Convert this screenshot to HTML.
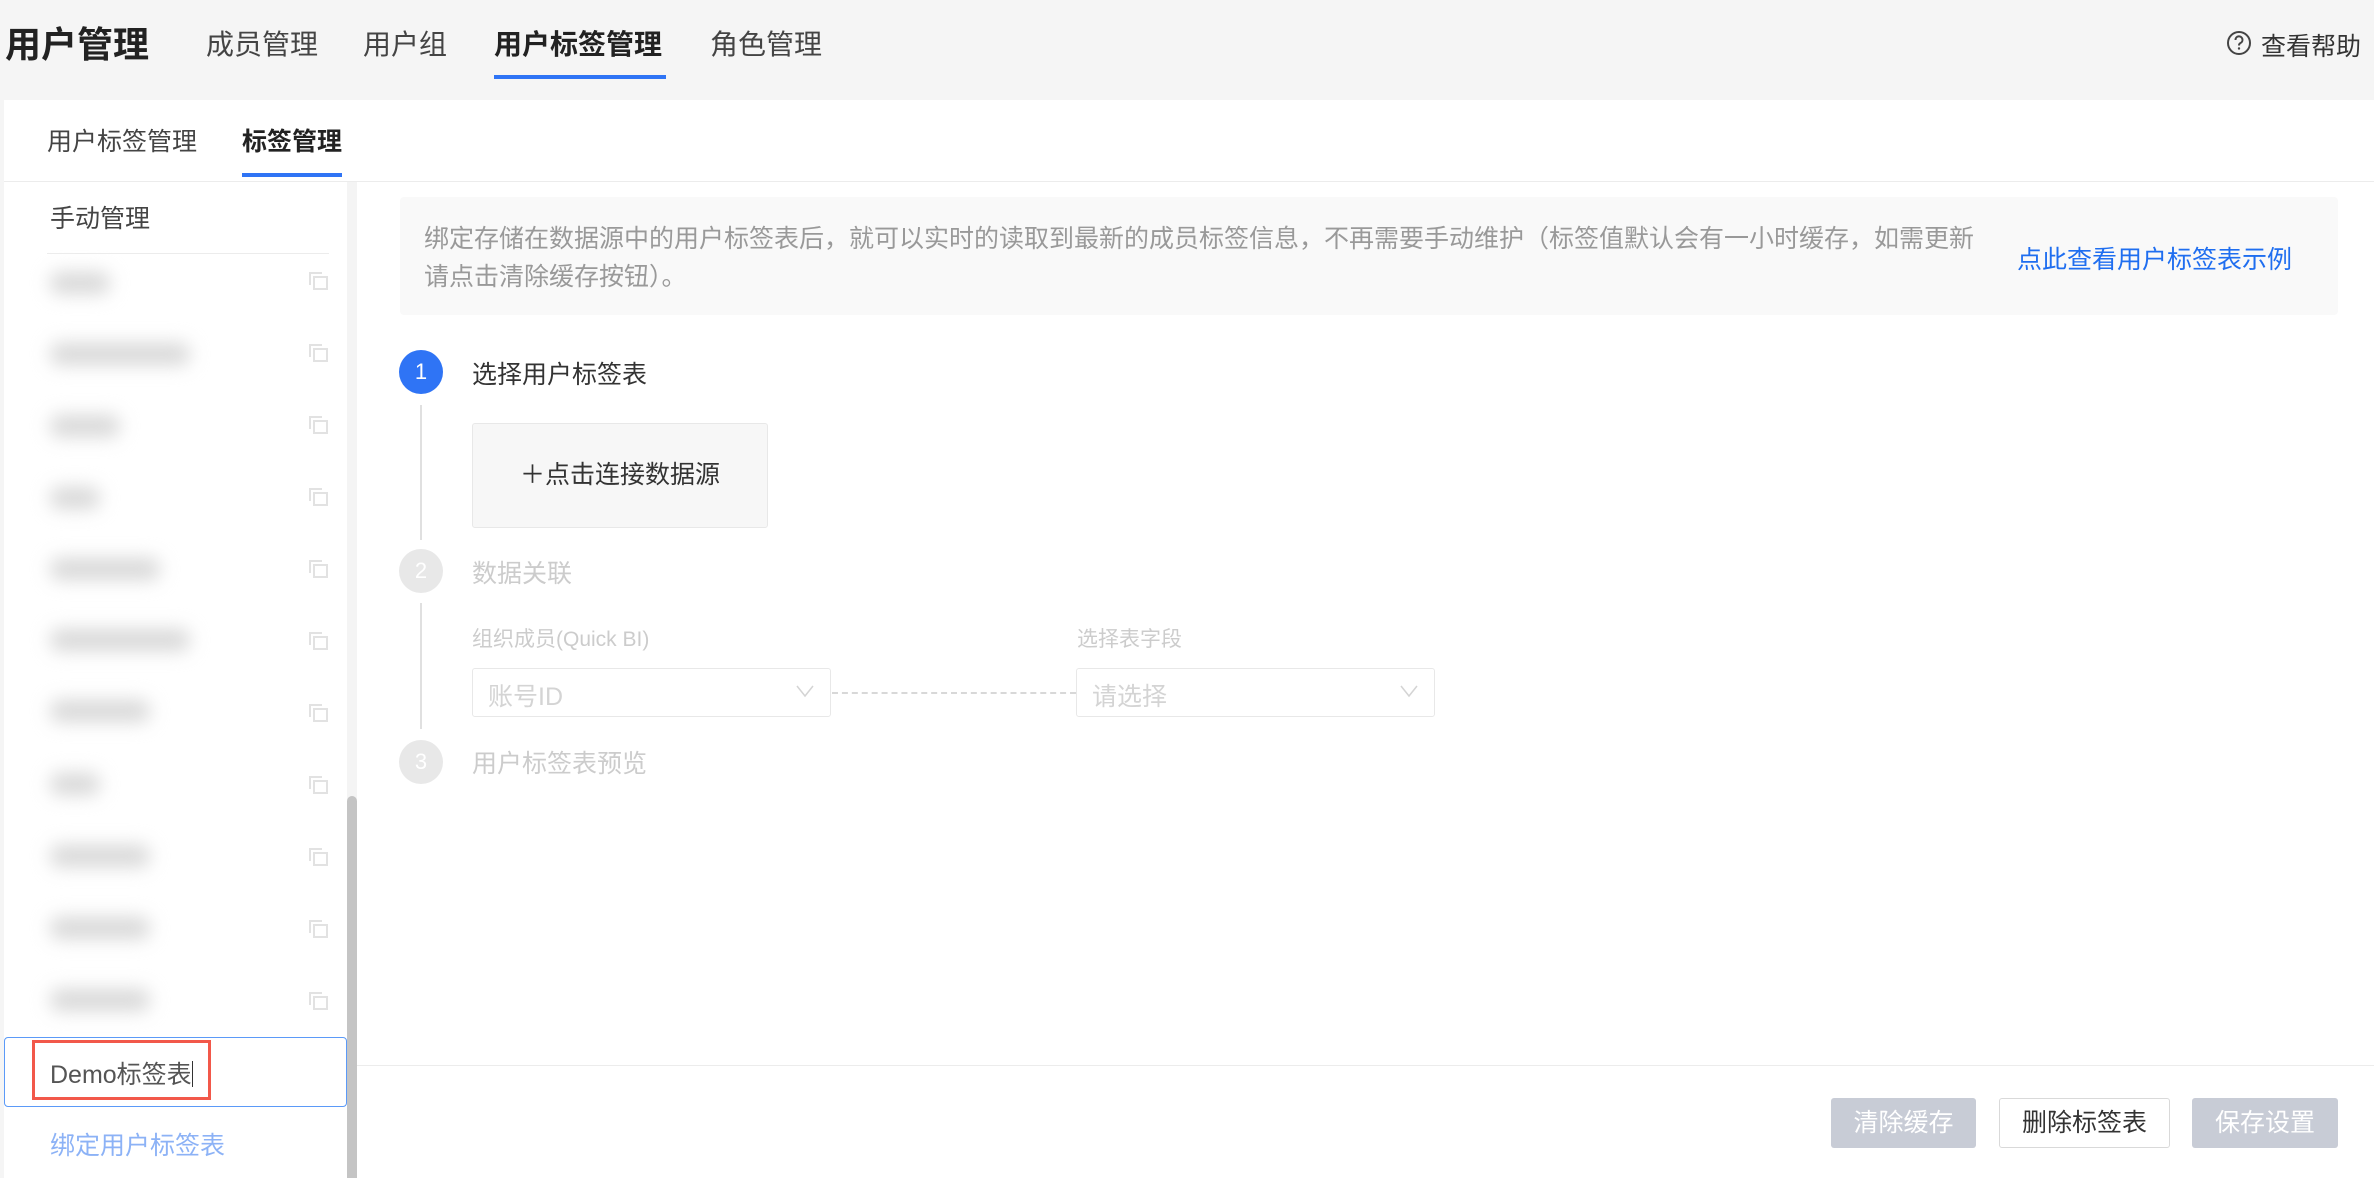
<!DOCTYPE html>
<html><head><meta charset="utf-8"><style>
*{margin:0;padding:0;box-sizing:border-box}
body{width:2374px;height:1178px;overflow:hidden;background:#f5f5f5;font-family:"Liberation Sans","Noto Sans CJK SC",sans-serif;position:relative}
.a{position:absolute;white-space:nowrap}
.blur{position:absolute;background:#d8d8d8;filter:blur(9px);height:22px;border-radius:10px}
.cp{position:absolute;width:20px;height:18px}
</style></head><body>
<div class="a" style="left:5px;top:16px;font-size:36px;font-weight:bold;color:#222">用户管理</div>
<div class="a" style="left:206px;top:23px;font-size:28px;color:#444">成员管理</div>
<div class="a" style="left:363px;top:23px;font-size:28px;color:#444">用户组</div>
<div class="a" style="left:494px;top:23px;font-size:28px;color:#222;font-weight:bold">用户标签管理</div>
<div class="a" style="left:494px;top:75px;width:172px;height:4px;background:#2f74f5"></div>
<div class="a" style="left:710px;top:23px;font-size:28px;color:#444">角色管理</div>
<svg class="a" style="left:2226px;top:30px" width="26" height="26" viewBox="0 0 26 26"><circle cx="13" cy="13" r="11" fill="none" stroke="#444" stroke-width="2"/><path d="M9.5 10a3.5 3.5 0 1 1 5 3c-1.2.6-1.5 1.2-1.5 2.5" fill="none" stroke="#444" stroke-width="2"/><circle cx="13" cy="18.5" r="1.2" fill="#444"/></svg>
<div class="a" style="left:2261px;top:27px;font-size:25px;color:#333">查看帮助</div>

<div class="a" style="left:4px;top:100px;width:2370px;height:1078px;background:#fff"></div>
<div class="a" style="left:47px;top:122px;font-size:25px;color:#444">用户标签管理</div>
<div class="a" style="left:242px;top:122px;font-size:25px;color:#222;font-weight:bold">标签管理</div>
<div class="a" style="left:242px;top:173px;width:100px;height:4px;background:#2f74f5"></div>
<div class="a" style="left:4px;top:181px;width:2370px;height:1px;background:#ececec"></div>

<div class="a" style="left:347px;top:182px;width:10px;height:996px;background:#f4f4f4"></div>
<div class="a" style="left:347px;top:796px;width:10px;height:382px;background:#c4c4c4;border-radius:5px 5px 0 0"></div>

<div class="a" style="left:50px;top:199px;font-size:25px;color:#444">手动管理</div>
<div class="a" style="left:47px;top:253px;width:282px;height:1px;background:#ececec"></div>

<div class="blur" style="left:50px;top:272px;width:60px"></div>
<div class="blur" style="left:50px;top:343px;width:140px"></div>
<div class="blur" style="left:50px;top:415px;width:70px"></div>
<div class="blur" style="left:50px;top:487px;width:50px"></div>
<div class="blur" style="left:50px;top:558px;width:110px"></div>
<div class="blur" style="left:50px;top:629px;width:140px"></div>
<div class="blur" style="left:50px;top:700px;width:100px"></div>
<div class="blur" style="left:50px;top:773px;width:50px"></div>
<div class="blur" style="left:50px;top:845px;width:100px"></div>
<div class="blur" style="left:50px;top:917px;width:100px"></div>
<div class="blur" style="left:50px;top:989px;width:100px"></div>

<svg width="0" height="0" style="position:absolute"><defs><g id="cp"><path d="M1 13V1h12M5 5h13v12H5z" fill="none" stroke="#e2e2e2" stroke-width="2"/></g></defs></svg>
<svg class="cp" style="left:309px;top:272px"><use href="#cp"/></svg>
<svg class="cp" style="left:309px;top:344px"><use href="#cp"/></svg>
<svg class="cp" style="left:309px;top:416px"><use href="#cp"/></svg>
<svg class="cp" style="left:309px;top:488px"><use href="#cp"/></svg>
<svg class="cp" style="left:309px;top:560px"><use href="#cp"/></svg>
<svg class="cp" style="left:309px;top:632px"><use href="#cp"/></svg>
<svg class="cp" style="left:309px;top:704px"><use href="#cp"/></svg>
<svg class="cp" style="left:309px;top:776px"><use href="#cp"/></svg>
<svg class="cp" style="left:309px;top:848px"><use href="#cp"/></svg>
<svg class="cp" style="left:309px;top:920px"><use href="#cp"/></svg>
<svg class="cp" style="left:309px;top:992px"><use href="#cp"/></svg>

<div class="a" style="left:4px;top:1037px;width:343px;height:70px;border:1.5px solid #5b9af8;border-radius:4px;background:#fff"></div>
<div class="a" style="left:32px;top:1040px;width:179px;height:60px;border:3px solid #f2584a"></div>
<div class="a" style="left:50px;top:1055px;font-size:25px;color:#555">Demo标签表<span style="display:inline-block;width:1.5px;height:26px;background:#333;vertical-align:-4px"></span></div>
<div class="a" style="left:50px;top:1126px;font-size:25px;color:#8cb2f6">绑定用户标签表</div>

<div class="a" style="left:400px;top:197px;width:1938px;height:118px;background:#f9f9f9;border-radius:4px"></div>
<div class="a" style="left:424px;top:220px;font-size:25px;color:#999;line-height:38px">绑定存储在数据源中的用户标签表后，就可以实时的读取到最新的成员标签信息，不再需要手动维护（标签值默认会有一小时缓存，如需更新<br>请点击清除缓存按钮）。</div>
<div class="a" style="left:2017px;top:240px;font-size:25px;color:#1f6ef0">点此查看用户标签表示例</div>

<div class="a" style="left:399px;top:350px;width:44px;height:44px;border-radius:50%;background:#2f74f5;color:#fff;font-size:22px;text-align:center;line-height:44px">1</div>
<div class="a" style="left:472px;top:355px;font-size:25px;color:#333">选择用户标签表</div>
<div class="a" style="left:420px;top:405px;width:2px;height:135px;background:#e0e0e0"></div>
<div class="a" style="left:472px;top:423px;width:296px;height:105px;background:#f7f7f7;border:1px solid #e8e8e8;border-radius:3px;font-size:25px;color:#333;text-align:center;line-height:103px">＋点击连接数据源</div>

<div class="a" style="left:399px;top:549px;width:44px;height:44px;border-radius:50%;background:#e8e8e8;color:#fff;font-size:22px;text-align:center;line-height:44px">2</div>
<div class="a" style="left:472px;top:554px;font-size:25px;color:#ccc">数据关联</div>
<div class="a" style="left:420px;top:603px;width:2px;height:126px;background:#e0e0e0"></div>
<div class="a" style="left:472px;top:623px;font-size:21px;color:#ccc">组织成员(Quick BI)</div>
<div class="a" style="left:1077px;top:623px;font-size:21px;color:#ccc">选择表字段</div>
<div class="a" style="left:472px;top:668px;width:359px;height:49px;border:1px solid #e8e8e8;border-radius:3px"></div>
<div class="a" style="left:488px;top:677px;font-size:25px;color:#d4d4d4">账号ID</div>
<div class="a" style="left:1076px;top:668px;width:359px;height:49px;border:1px solid #e8e8e8;border-radius:3px"></div>
<div class="a" style="left:1092px;top:677px;font-size:25px;color:#d4d4d4">请选择</div>
<svg class="a" style="left:795px;top:684px" width="20" height="14"><path d="M2 2l8 10 8-10" fill="none" stroke="#d4d4d4" stroke-width="1.5"/></svg>
<svg class="a" style="left:1399px;top:684px" width="20" height="14"><path d="M2 2l8 10 8-10" fill="none" stroke="#d4d4d4" stroke-width="1.5"/></svg>
<div class="a" style="left:832px;top:692px;width:244px;border-top:2px dashed #d8d8d8"></div>

<div class="a" style="left:399px;top:740px;width:44px;height:44px;border-radius:50%;background:#e8e8e8;color:#fff;font-size:22px;text-align:center;line-height:44px">3</div>
<div class="a" style="left:472px;top:744px;font-size:25px;color:#ccc">用户标签表预览</div>

<div class="a" style="left:357px;top:1065px;width:2017px;height:1px;background:#ececec"></div>
<div class="a" style="left:1831px;top:1098px;width:145px;height:50px;background:#c8ccd6;border-radius:3px;color:#fff;font-size:25px;text-align:center;line-height:50px">清除缓存</div>
<div class="a" style="left:1999px;top:1098px;width:171px;height:50px;background:#fff;border:1px solid #d9d9d9;border-radius:3px;color:#333;font-size:25px;text-align:center;line-height:48px">删除标签表</div>
<div class="a" style="left:2192px;top:1098px;width:146px;height:50px;background:#c8ccd6;border-radius:3px;color:#fff;font-size:25px;text-align:center;line-height:50px">保存设置</div>
</body></html>
